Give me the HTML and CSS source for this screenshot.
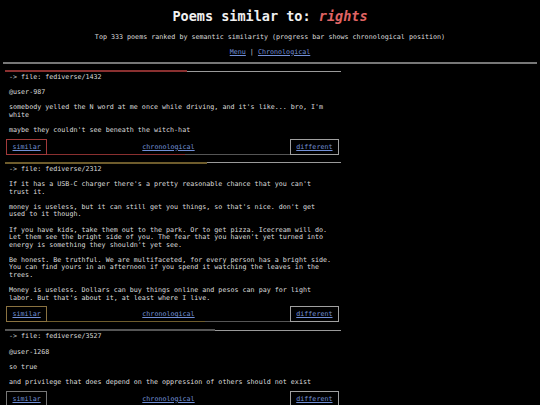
FILE: index.html
```html
<!DOCTYPE html>
<html>
<head>
<meta charset="utf-8">
<link rel="stylesheet" href="styles.css">
</head>
<body>
<header class="head">
  <h1 class="title">Poems similar to: <em class="term">rights</em></h1>
  <p class="sub">Top 333 poems ranked by semantic similarity (progress bar shows chronological position)</p>
  <nav class="topnav"><a href="#">Menu</a> | <a href="#">Chronological</a></nav>
</header>
<hr class="rule">
<main class="list">
  <article class="poem red" style="--p: 54.2%">
    <div class="bar"><span class="fill"></span><span class="rest"></span></div>
    <pre class="text">-&gt; file: fediverse/1432

@user-987

somebody yelled the N word at me once while driving, and it's like... bro, I'm white

maybe they couldn't see beneath the witch-hat</pre>
    <div class="actions">
      <a class="btn sim" href="#">similar</a>
      <a class="chrono" href="#">chronological</a>
      <a class="btn diff" href="#">different</a>
    </div>
  </article>
  <article class="poem olive" style="--p: 60.1%">
    <div class="bar"><span class="fill"></span><span class="rest"></span></div>
    <pre class="text">-&gt; file: fediverse/2312

If it has a USB-C charger there's a pretty reasonable chance that you can't trust it.

money is useless, but it can still get you things, so that's nice. don't get used to it though.

If you have kids, take them out to the park. Or to get pizza. Icecream will do. Let them see the bright side of you. The fear that you haven't yet turned into energy is something they shouldn't yet see.

Be honest. Be truthful. We are multifaceted, for every person has a bright side. You can find yours in an afternoon if you spend it watching the leaves in the trees.

Money is useless. Dollars can buy things online and pesos can pay for light labor. But that's about it, at least where I live.</pre>
    <div class="actions">
      <a class="btn sim" href="#">similar</a>
      <a class="chrono" href="#">chronological</a>
      <a class="btn diff" href="#">different</a>
    </div>
  </article>
  <article class="poem grey" style="--p: 62.5%">
    <div class="bar"><span class="fill"></span><span class="rest"></span></div>
    <pre class="text">-&gt; file: fediverse/3527

@user-1268

so true

and privilege that does depend on the oppression of others should not exist</pre>
    <div class="actions">
      <a class="btn sim" href="#">similar</a>
      <a class="chrono" href="#">chronological</a>
      <a class="btn diff" href="#">different</a>
    </div>
  </article>
</main>
</body>
</html>
```

FILE: styles.css
```css
html, body {
  background: #000;
}
body {
  margin: 0;
  padding: 0 3px;
  color: #dcdcdc;
  font-family: "DejaVu Sans Mono", monospace;
  font-size: 6.7px;
  -webkit-font-smoothing: antialiased;
}
.head, .list {
  opacity: 0.999;
}
a {
  color: #7290d8;
  text-decoration: underline;
}
.head {
  text-align: center;
}
.title {
  margin: 8px 0 0;
  font-size: 13.5px;
  line-height: 16px;
  font-weight: bold;
  color: #f0f0f0;
}
.term {
  color: #e06464;
  font-style: italic;
}
.sub {
  margin: 9px 0 0;
  line-height: 9px;
}
.topnav {
  margin-top: 5.5px;
  line-height: 9px;
  color: #cfcfcf;
}
.rule {
  margin: 5px 0 0;
  border: 0;
  height: 2px;
  background: #777;
}
.list {
  padding-top: 6.5px;
  padding-left: 2px;
}
.poem {
  width: 336px;
  margin-bottom: 7px;
  --c: #8b3030;
  --b: #a33a3a;
}
.poem.red { --c: #8a3030; --b: #a23a3a; }
.poem.olive { --c: #6e5c2c; --b: #8a7240; }
.poem.grey { --c: #555; --b: #777; }
.bar {
  display: flex;
  align-items: center;
  height: 2px;
}
.fill {
  width: var(--p);
  height: 2px;
  background: var(--c);
}
.rest {
  flex: 1;
  height: 1px;
  background: #9a9a9a;
}
.text {
  margin: 0;
  padding: 2px 0 0 4px;
  width: 80.5ch;
  font-family: inherit;
  font-size: 6.7px;
  line-height: 7.6px;
  white-space: pre-wrap;
  color: #dcdcdc;
}
.actions {
  display: flex;
  align-items: stretch;
  margin: 4px 2px 0 1px;
  height: 16px;
  background: linear-gradient(to right, var(--c) 0, var(--c) calc(var(--p) - 1px), #555 calc(var(--p) - 1px)) bottom / 100% 1px no-repeat;
}
.btn {
  display: flex;
  align-items: center;
  justify-content: center;
  padding: 0 5.5px;
  background: #000;
  border: 1px solid #999;
}
.btn.sim {
  border-color: var(--b);
}
.btn.diff {
  border-color: #a0a0a0;
}
.chrono {
  flex: 1;
  display: flex;
  align-items: center;
  justify-content: center;
}
```
